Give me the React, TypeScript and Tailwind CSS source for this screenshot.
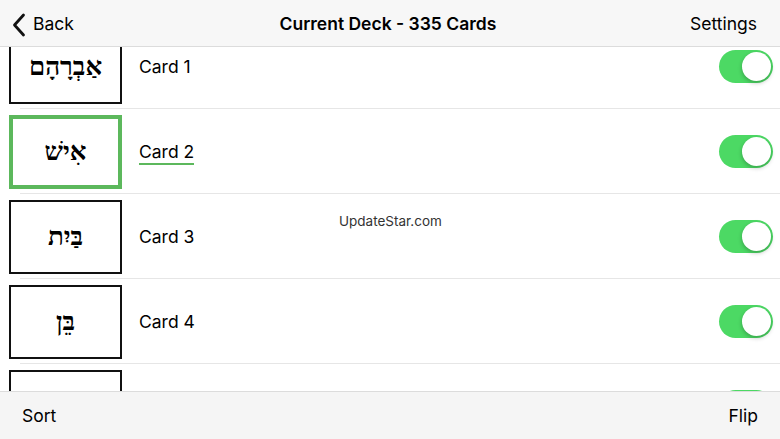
import React from "react";

const cards = [
  { word: "אַבְרָהָם", label: "Card 1" },
  { word: "אִישׁ", label: "Card 2", selected: true },
  { word: "בַּיִת", label: "Card 3" },
  { word: "בֵּן", label: "Card 4" },
  { word: "", label: "" },
];

function Toggle() {
  return (
    <div className="relative w-[54px] h-[33px] rounded-full bg-[#4cd964]">
      <div className="absolute right-[2px] top-[2px] w-[29px] h-[29px] rounded-full bg-white shadow-[0_2px_4px_rgba(0,0,0,0.25)]" />
    </div>
  );
}

export default function App() {
  return (
    <div
      className="w-[780px] h-[439px] flex flex-col bg-white overflow-hidden text-black"
      style={{ fontFamily: "Inter, 'Liberation Sans', sans-serif" }}
    >
      <div className="h-[47px] shrink-0 bg-[#f7f7f7] border-b border-[#dcdcdc] flex items-center px-[12px] pt-[3px] relative z-10">
        <div className="flex items-center gap-[7px]">
          <svg width="14" height="24" viewBox="0 0 14 24">
            <path d="M11.5 2 L2.5 12 L11.5 22" fill="none" stroke="#111" strokeWidth="2.8" strokeLinecap="round" strokeLinejoin="round" />
          </svg>
          <span className="text-[17.5px]">Back</span>
        </div>
        <div className="flex-1 text-center text-[17.5px] font-semibold pl-[12px]">Current Deck - 335 Cards</div>
        <span className="text-[17.5px] pr-[11px]">Settings</span>
      </div>
      <div className="flex-1 overflow-hidden relative">
        <div className="-mt-[23px]">
          {cards.map((c, i) => (
            <div key={i} className="h-[85px] flex items-center relative">
              <div
                className={
                  c.selected
                    ? "ml-[9px] w-[113px] h-[74px] border-[4px] border-[#5cb85c] flex items-center justify-center"
                    : "ml-[9px] w-[113px] h-[74px] border-2 border-[#111] flex items-center justify-center"
                }
              >
                <span
                  className="text-[26px] leading-none font-bold"
                  dir="rtl"
                  style={{ fontFamily: "'Liberation Serif', 'DejaVu Serif', serif" }}
                >
                  {c.word}
                </span>
              </div>
              <div className="ml-[17px] flex-1 pt-[2px]">
                {c.label && (
                  <span className={c.selected ? "text-[17.5px] border-b-2 border-[#5cb85c] pb-[1px]" : "text-[17.5px]"}>
                    {c.label}
                  </span>
                )}
              </div>
              <div className="mr-[7px]">
                <Toggle />
              </div>
              {i < cards.length - 1 && (
                <div className="absolute left-[20px] right-0 bottom-0 h-px bg-[#e6e6e6]" />
              )}
            </div>
          ))}
        </div>
        <div className="absolute left-[339px] top-[164px] text-[13.5px] text-[#333]">UpdateStar.com</div>
      </div>
      <div className="h-[48px] shrink-0 bg-[#f5f5f5] border-t border-[#dcdcdc] flex items-center justify-between px-[22px] pt-[2px] relative z-10">
        <span className="text-[17.5px]">Sort</span>
        <span className="text-[17.5px]">Flip</span>
      </div>
    </div>
  );
}
